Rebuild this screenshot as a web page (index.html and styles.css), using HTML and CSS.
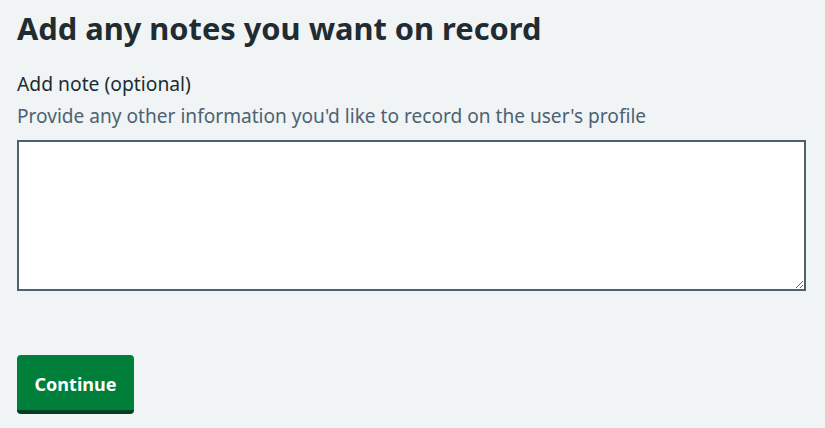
FILE: index.html
```html
<!DOCTYPE html>
<html lang="en">
<head>
<meta charset="utf-8">
<title>Add any notes you want on record</title>
<link rel="stylesheet" href="styles.css">
</head>
<body>
<main class="page">
  <h1 class="heading">Add any notes you want on record</h1>
  <div class="form-group">
    <label class="label" for="note">Add note (optional)</label>
    <div class="hint">Provide any other information you'd like to record on the user's profile</div>
    <textarea class="textarea" id="note" rows="5"></textarea>
  </div>
  <button class="button" type="button">Continue</button>
</main>
</body>
</html>
```
FILE: styles.css
```css
html, body {
  margin: 0;
  padding: 0;
  background: #f0f4f5;
}
body {
  font-family: "Noto Sans", "Open Sans", Arial, sans-serif;
  color: #212b32;
}
.page {
  padding: 8px 19px 0 17px;
  display: flex;
  flex-direction: column;
  align-items: flex-start;
}
.heading {
  margin: 0 0 22px;
  font-size: 30.8px;
  line-height: 40px;
  font-weight: 700;
}
.form-group {
  display: flex;
  flex-direction: column;
  align-self: stretch;
  margin-bottom: 64px;
}
.label {
  font-size: 19.3px;
  line-height: 28px;
  margin-bottom: 4px;
}
.hint {
  font-size: 19.1px;
  line-height: 28px;
  color: #4c6272;
  margin-bottom: 10px;
}
.textarea {
  box-sizing: border-box;
  width: 100%;
  height: 151px;
  border: 2px solid #4c6272;
  background: #fff;
  margin: 0;
  padding: 4px;
  font-family: inherit;
  font-size: 18px;
  border-radius: 0;
}
.button {
  box-sizing: border-box;
  font-family: inherit;
  font-size: 18px;
  font-weight: 700;
  line-height: 24px;
  color: #fff;
  background: #007f3b;
  border: 0;
  border-bottom: 4px solid #00401e;
  border-radius: 4px;
  padding: 12px 17px 10px;
  width: 117px;
  height: 59px;
  cursor: pointer;
}
```
